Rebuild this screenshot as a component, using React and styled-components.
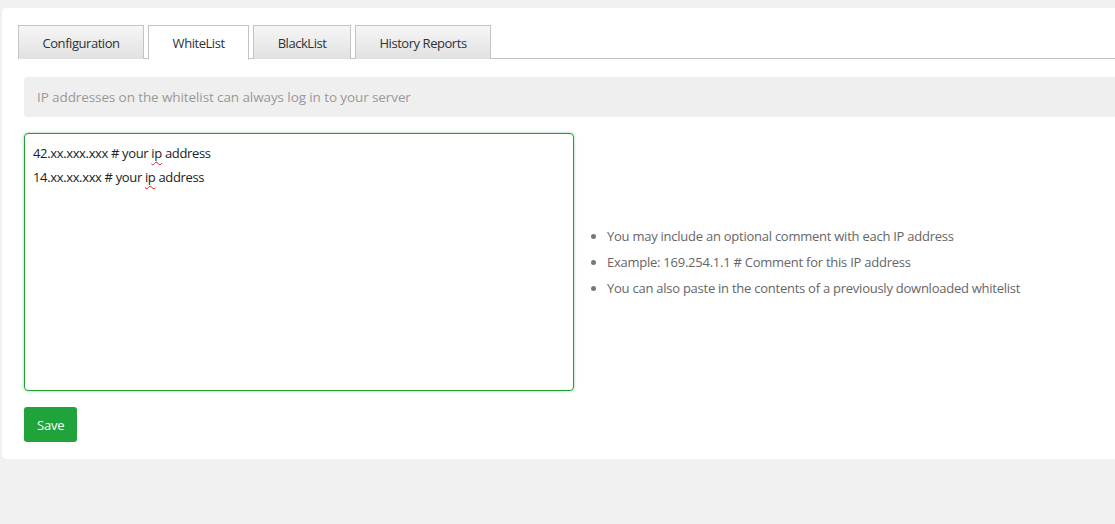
import styled, { createGlobalStyle } from "styled-components"

const GlobalStyle = createGlobalStyle`
  html, body {
    margin: 0;
    padding: 0;
    background: #f1f1f1;
    overflow: hidden;
    font-family: "Open Sans", "Noto Sans", sans-serif;
  }
`

const tabs = ["Configuration", "WhiteList", "BlackList", "History Reports"]

const tips = [
  "You may include an optional comment with each IP address",
  "Example: 169.254.1.1 # Comment for this IP address",
  "You can also paste in the contents of a previously downloaded whitelist",
]

export default function App() {
  return (
    <>
      <GlobalStyle />
      <Card>
        <TabBar>
          {tabs.map((t) => (
            <Tab key={t} $active={t === "WhiteList"}>{t}</Tab>
          ))}
        </TabBar>
        <Panel>
          <Notice>IP addresses on the whitelist can always log in to your server</Notice>
          <Row>
            <Editor contentEditable suppressContentEditableWarning spellCheck={false}>
              <Line>42.xx.xxx.xxx # your <Typo>ip</Typo> address</Line>
              <Line>14.xx.xx.xxx # your <Typo>ip</Typo> address</Line>
            </Editor>
            <Tips>
              {tips.map((t) => (
                <li key={t}>{t}</li>
              ))}
            </Tips>
          </Row>
          <SaveButton>Save</SaveButton>
        </Panel>
      </Card>
    </>
  )
}

const Card = styled.div`
  margin: 8px 0 0 2px;
  width: 1160px;
  height: 451px;
  box-sizing: border-box;
  background: #fff;
  border-radius: 4px;
  box-shadow: 0 1px 1px rgba(0,0,0,0.06);
  padding: 17px 16px 0 16px;
`

const TabBar = styled.div`
  display: flex;
  gap: 4px;
  height: 34px;
  border-bottom: 1px solid #c3c4c7;
  box-sizing: border-box;
`

const Tab = styled.div`
  box-sizing: border-box;
  padding: 0 23.5px;
  display: flex;
  align-items: center;
  font-size: 13px;
  color: #2c3338;
  border: 1px solid #c3c4c7;
  border-bottom: ${(p) => (p.$active ? "1px solid #fff" : "none")};
  background: ${(p) => (p.$active ? "#fff" : "linear-gradient(#f6f6f6, #e1e1e1)")};
  margin-bottom: ${(p) => (p.$active ? "-1px" : "0")};
  height: ${(p) => (p.$active ? "35px" : "34px")};
  letter-spacing: -0.45px;
`

const Panel = styled.div`
  padding: 18px 6px 0 6px;
`

const Notice = styled.div`
  height: 40px;
  background: #efefef;
  border-radius: 4px;
  display: flex;
  align-items: center;
  padding-left: 13px;
  font-size: 13.5px;
  color: #999;
  letter-spacing: -0.1px;
`

const Row = styled.div`
  display: flex;
  align-items: center;
  margin-top: 16px;
`

const Editor = styled.div`
  width: 550px;
  height: 258px;
  box-sizing: border-box;
  border: 1px solid #1f9d37;
  border-radius: 4px;
  box-shadow: 0 0 2px 1px rgba(40,167,69,0.25);
  padding: 7px 8px;
  font-size: 13px;
  color: #222;
  outline: none;
  letter-spacing: -0.35px;
`

const Line = styled.div`
  line-height: 24px;
`

const Typo = styled.span`
  text-decoration: underline wavy #e01b1b;
  text-decoration-thickness: 1px;
  text-underline-offset: 3px;
`

const Tips = styled.ul`
  margin: 0;
  padding-left: 33px;
  font-size: 13px;
  color: #666;
  letter-spacing: -0.25px;
  li {
    line-height: 26px;
  }
  li::marker {
    color: #777;
  }
`

const SaveButton = styled.button`
  margin-top: 16px;
  height: 35px;
  padding: 0 13px;
  background: #21a33b;
  color: #fff;
  border: none;
  border-radius: 3px;
  font-family: inherit;
  font-size: 13px;
  letter-spacing: -0.2px;
  cursor: pointer;
`
